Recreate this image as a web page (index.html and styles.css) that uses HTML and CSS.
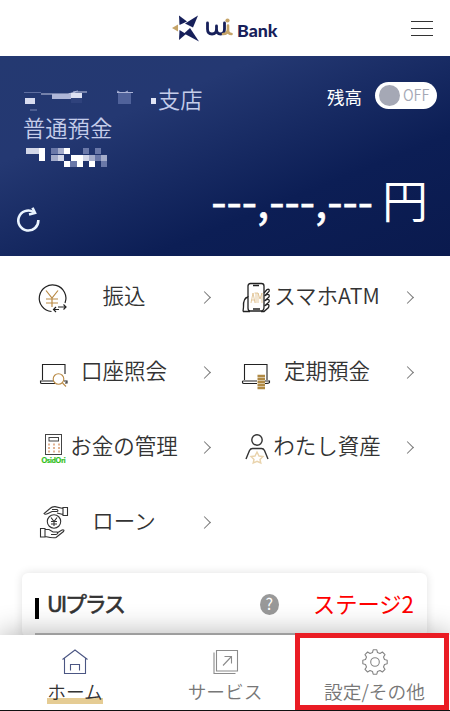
FILE: index.html
```html
<!DOCTYPE html>
<html lang="ja">
<head>
  <meta charset="UTF-8">
  <title>UI Bank</title>
  <link rel="stylesheet" href="styles.css">
</head>
<body>
  <div class="app">
    <header class="header">
      <div class="logo">
        <svg class="logo-mark" viewBox="0 0 28 28" width="28" height="28">
          <g fill="#17205a">
            <path d="M7 1.500 L15 7.500 L7.500 11 Z"/>
            <path d="M26 1.500 L21 13.500 L13 9.500 Z"/>
            <path d="M7 26 L7.500 16 L14 20 Z"/>
            <path d="M27 27.500 L12 19.500 L18 14 Z"/>
          </g>
          <path d="M6 10.500 L6 17.500 L0 14 Z" fill="#c5a468"/>
        </svg>
        <svg class="logo-ui" viewBox="0 0 28 20" width="28" height="20" fill="none" stroke-width="2.800" stroke-linecap="round">
          <path d="M1.500 5 V11 Q1.500 16 6 16 Q10.500 16 10.500 11 V8 M10.500 11 Q10.500 16 14.500 16 Q18.500 16 18.500 11 V5" stroke="#17205a"/>
          <path d="M22 7.500 V12 Q22 16 25.500 16 M17 16 Q22 16 22 11" stroke="#c5a468" stroke-width="2.600"/>
          <circle cx="21.500" cy="2.500" r="2.100" fill="#c5a468"/>
        </svg>
        <span class="logo-text">Bank</span>
      </div>
      <div class="burger"><span></span><span></span><span></span></div>
    </header>

    <section class="account">
      <div class="account-top">
        <div class="account-info">
          <div class="branch">
            <svg class="mask-name" viewBox="0 0 134 24" width="134" height="24">
              <path d="M0 5.500 H17" stroke="#7885b4" stroke-width=".7"/>
              <path d="M17 7 H44 L52 5 H63" stroke="#c5cbe5" stroke-width="1" fill="none"/>
              <rect x="1" y="11" width="10" height="6" fill="#d8dcf0"/>
              <rect x="28" y="7" width="19" height="5" fill="#afb7d8"/>
              <rect x="47" y="6" width="11" height="5" fill="#dde1f2"/>
              <rect x="47" y="11" width="11" height="5" fill="#2f427c"/>
              <path d="M49 5 L54 4 M93 4 L96 5.500 M104 4 L101 5.500 M93 5.500 H109" stroke="#aab3d6"/>
              <rect x="94" y="6" width="13" height="11" fill="#50629a"/>
              <rect x="127" y="11" width="5" height="6" fill="#e0e4f4"/>
              <path d="M6 23 H13" stroke="#7885b4"/>
            </svg><span>支店</span>
          </div>
          <div class="type">普通預金</div>
          <svg class="mask-number" viewBox="0 0 86 20" width="86" height="20" shape-rendering="crispEdges">
            <g fill="#fff">
              <path d="M13 0h6v13h-6zM45 7h13v6h-13zM38 13h6v6h-6zM51 13h6v6h-6zM63 13h6v6h-6z"/>
              <path d="M38 0h6v6h-6z"/>
            </g>
            <path d="M0 0h13v6h-13zM32 7h6v6h-6zM57 7h6v6h-6z" fill="#d3d7e8"/>
            <path d="M25 7h7v6h-7zM32 0h6v6h-6zM63 7h6v6h-6zM75 7h6v6h-6z" fill="#a4acca"/>
            <path d="M25 0h7v6h-7zM57 0h6v6h-6zM69 0h6v6h-6zM69 7h6v6h-6zM75 13h6v6h-6zM44 13h7v6h-7z" fill="#6a78a8"/>
          </svg>
        </div>
        <div class="balance-switch">
          <span class="switch-label">残高</span>
          <div class="toggle"><i class="knob"></i><span>OFF</span></div>
        </div>
      </div>
      <div class="account-bottom">
        <svg class="reload" viewBox="0 0 24 26" width="24" height="26" fill="none" stroke="#eaf4ff" stroke-width="2.600">
          <path d="M16.500 5 A10 10 0 1 0 21.300 13"/>
          <path d="M15.500 .8 L18 6 L12 7.500"/>
        </svg>
        <div class="amount"><span class="digits">---,---,---</span> <span class="yen">円</span></div>
      </div>
    </section>

    <section class="menu">
      <a class="item">
        <svg class="icon" viewBox="0 0 32 34" width="32" height="34" fill="none" stroke="#222" stroke-width="1.200">
          <path d="M14.500 30.500 A13.300 13.300 0 1 1 28 22"/>
          <path d="M17 28.500 H22 M19 26 L16.500 28.500 L19 31 M21 26 H29 M26.500 23.500 L29 26 L26.500 28.500"/>
          <path d="M9 9.500 L15 17 L21 9.500 M15 17 V26 M9 18 H21 M9 22 H21" stroke="#b98a45"/>
        </svg>
        <span class="label">振込</span><i class="chevron"></i>
      </a>
      <a class="item">
        <svg class="icon" viewBox="0 0 32 34" width="32" height="34" fill="none" stroke="#222" stroke-width="1.300">
          <path d="M8 16 V5 Q8 2.500 10.500 2.500 H21.500 Q24 2.500 24 5 V26 Q24 30 21 30 H10 Q8 30 8 27 V25"/>
          <path d="M13 4.500 H19 M13 28 H20" stroke-width="1.500"/>
          <path d="M3 30.500 H10 M3 30.500 L3.500 26 Q3 17 8 16 V25"/>
          <path d="M24 12 L27 8.500 Q30 7.500 29 10.500 L24.500 15 L27 13.500 Q30 13 29 16 L24.500 20 L27 18.500 Q30 18 29 21 L24.500 25 L27 23.500 Q30 23 28.500 26.500 L24 30.500 H21"/>
          <path d="M11 22 L13 12 L15 22 M11.500 19 H14.500 M14.500 12 H18 M16 12 V22 M18 22 V12 L20 18 L22 12 V22" stroke="#ddbd88" stroke-width=".8"/>
        </svg>
        <span class="label">スマホATM</span><i class="chevron"></i>
      </a>
      <a class="item">
        <svg class="icon" viewBox="0 0 32 34" width="32" height="34" fill="none" stroke="#222" stroke-width="1.100">
          <path d="M5.500 24 V8.500 H28 V18 M5.500 25 H3.500 V26.500 Q3.500 27.500 5 27.500 H18 M3.500 25 H17 M27 25 H30 V27 H28"/>
          <circle cx="21.500" cy="23" r="5.300" stroke="#b98a45"/>
          <path d="M25.500 27 L29 30.500" stroke="#b98a45"/>
        </svg>
        <span class="label">口座照会</span><i class="chevron"></i>
      </a>
      <a class="item">
        <svg class="icon" viewBox="0 0 32 34" width="32" height="34" fill="none" stroke="#222" stroke-width="1.100">
          <path d="M4.500 24 V8.500 H27 V24 M2.500 25 H17 M2.500 25 V26.500 Q2.500 27.500 4 27.500 H17 M25 25 H29.500 V26.500 Q29 27.500 25 27.500"/>
          <path d="M17.500 20 H25 M17.500 23 H25 M17.500 26 H25 M17.500 29 H25 M17.500 32 H25" stroke="#b08a45" stroke-width="2.400"/>
        </svg>
        <span class="label">定期預金</span><i class="chevron"></i>
      </a>
      <a class="item">
        <svg class="icon" viewBox="0 0 32 34" width="32" height="34" fill="none" stroke="#444">
          <rect x="8.500" y="3.500" width="16" height="20"/>
          <rect x="12" y="6.500" width="9.500" height="3.500"/>
          <path d="M11 13.500 H23 M11 17 H23 M11 20.500 H23" stroke="#e2b393" stroke-width="1.800" stroke-dasharray="2 3"/>
          <text x="16.500" y="31.500" class="osidori" textLength="24">OsidOri</text>
        </svg>
        <span class="label">お金の管理</span><i class="chevron"></i>
      </a>
      <a class="item">
        <svg class="icon" viewBox="0 0 32 34" width="32" height="34" fill="none" stroke="#333" stroke-width="1.400">
          <circle cx="17" cy="9" r="5.200"/>
          <path d="M6 28 L9.500 19.500 Q10.500 17.500 12.500 17.500 H21.500 Q23.500 17.500 24.500 19.500 L28 28"/>
          <path d="M17 21 L19 25 L23 25.500 L20 28.500 L20.800 32 L17 30.300 L13.200 32 L14 28.500 L11 25.500 L15 25 Z" stroke="#e9d3ac"/>
        </svg>
        <span class="label">わたし資産</span><i class="chevron"></i>
      </a>
      <a class="item">
        <svg class="icon" viewBox="0 0 32 34" width="32" height="34" fill="none" stroke="#333" stroke-width="1.100">
          <circle cx="17" cy="15.500" r="6.700"/>
          <path d="M14 11.500 L17 15.500 L20 11.500 M17 15.500 V20 M14 15.500 H20 M14 18 H20"/>
          <path d="M26 1.500 H30.500 V9.500 H26 Z M26 2.500 L18 .6 Q15 .5 13 2.500 L7 7.500 Q8 9 11 7.500 L15 5.500 H20 Q22 5 20 3.500 H15 M20 7 L26 8.500"/>
          <path d="M8 22.500 H3.500 V31 H8 Z M8 23.500 H12 L16 26 H20 Q22 27.500 19 28.500 H14 M20 27 L25 24 Q28 23.500 26.500 25.500 L19 31.500 Q17 32.500 8 30.500"/>
        </svg>
        <span class="label">ローン</span><i class="chevron"></i>
      </a>
    </section>

    <section class="plus">
      <div class="plus-head">
        <span class="plus-title">UIプラス</span>
        <span class="help">?</span>
        <span class="stage">ステージ2</span>
      </div>
    </section>

    <nav class="tabs">
      <a class="tab active">
        <svg viewBox="0 0 28 28" width="28" height="28" fill="none" stroke="#4b5683" stroke-width="1.100">
          <path d="M1.500 11.500 L14 2 L26.500 11.500 M3.500 10.500 V25.500 H24.500 V10.500 M9.500 22.500 V16.500 H18.500 V22.500"/>
        </svg>
        <span>ホーム</span>
      </a>
      <a class="tab">
        <svg viewBox="0 0 28 28" width="28" height="28" fill="none" stroke="#8b8b8b" stroke-width="1.100">
          <path d="M5.500 2.500 H26.500 V23 H5.500 Z M3 4.500 V25.500 H24.500 M12 17.500 L20 9 M13.500 8.500 H20.500 V15.500"/>
        </svg>
        <span>サービス</span>
      </a>
      <a class="tab selected">
        <svg viewBox="0 0 28 28" width="28" height="28" fill="none" stroke="#858585" stroke-width="1.100" stroke-linejoin="round">
          <path d="M11.500 4.500 L12.200 1.800 H15.800 L16.500 4.500 L19 5.500 L21.400 4 L24 6.600 L22.500 9 L23.500 11.500 L26.200 12.200 V15.800 L23.500 16.500 L22.500 19 L24 21.400 L21.400 24 L19 22.500 L16.500 23.500 L15.800 26.200 H12.200 L11.500 23.500 L9 22.500 L6.600 24 L4 21.400 L5.500 19 L4.500 16.500 L1.800 15.800 V12.200 L4.500 11.500 L5.500 9 L4 6.600 L6.600 4 L9 5.500 Z"/>
          <circle cx="14" cy="14" r="4.300"/>
        </svg>
        <span>設定/その他</span>
      </a>
    </nav>
  </div>
</body>
</html>
```
FILE: styles.css
```css
* {
  box-sizing: border-box;
}
html, body {
  margin: 0;
  padding: 0;
  font-family: "Noto Sans CJK JP", sans-serif;
  background: #fff;
}
.app {
  width: 450px;
  height: 711px;
  display: flex;
  flex-direction: column;
  overflow: hidden;
}

.header {
  height: 56px;
  flex: none;
  display: flex;
  align-items: center;
  justify-content: space-between;
  padding: 0 17px 0 172px;
}
.logo {
  display: flex;
  align-items: center;
}
.logo-ui {
  margin-left: 6px;
}
.logo-text {
  font-family: Lato, sans-serif;
  font-weight: 900;
  font-size: 17.800px;
  line-height: 20px;
  color: #17205a;
  margin: 4px 0 0 3px;
}
.burger {
  width: 22px;
  display: flex;
  flex-direction: column;
  gap: 6px;
}
.burger span {
  height: 1px;
  background: #333;
}

.account {
  height: 200px;
  flex: none;
  display: flex;
  flex-direction: column;
  justify-content: space-between;
  color: #fff;
  background: linear-gradient(158deg, #243971 0%, #243872 28%, #0c1e55 68%, #0a1a4e 100%);
}
.account-top {
  display: flex;
  justify-content: space-between;
  height: 112px;
  padding: 28px 13px 0 23px;
}
.account-info {
  font-size: 22.300px;
  line-height: 30px;
  font-weight: 350;
  color: #c5cdea;
}
.branch {
  display: flex;
  height: 28px;
  line-height: 29px;
}
.mask-name {
  margin: 3px 0 0 1px;
}
.type {
  height: 30px;
}
.mask-number {
  display: block;
  margin: 6px 0 0 3px;
}
.balance-switch {
  display: flex;
  height: 26px;
  margin-top: -2px;
}
.switch-label {
  font-size: 17.500px;
  line-height: 29px;
  margin-right: 13px;
}
.toggle {
  width: 62px;
  height: 27px;
  border-radius: 14px;
  background: #fff;
  color: #a5a8b5;
  display: flex;
  align-items: center;
  padding-left: 4px;
  font-size: 15.500px;
  font-weight: 350;
}
.toggle span {
  line-height: 22px;
  margin: -4px 0 0 3px;
  transform: scaleX(.93);
  transform-origin: left;
}
.knob {
  width: 21px;
  height: 21px;
  border-radius: 50%;
  background: #a5a8b5;
}
.account-bottom {
  display: flex;
  justify-content: space-between;
  align-items: flex-end;
  height: 88px;
  padding: 0 22px 23px 17px;
}
.amount {
  font-size: 44px;
  line-height: 62px;
  height: 66px;
  white-space: pre;
}
.digits {
  -webkit-text-stroke: .6px #fff;
}
.yen {
  font-size: 46px;
  font-weight: 350;
  margin-left: -1px;
}

.menu {
  flex: none;
  display: grid;
  grid-template-columns: 203px 203px;
  grid-auto-rows: 75px;
  padding: 4px 0 0 37px;
}
.item {
  display: flex;
  align-items: center;
  color: #333;
}
.icon {
  flex: none;
}
.label {
  width: 110px;
  font-size: 21.500px;
  line-height: 30px;
  font-weight: 350;
  text-align: center;
  white-space: nowrap;
  margin-top: -6px;
}
.chevron {
  width: 9px;
  height: 9px;
  border: solid #777;
  border-width: 1px 1px 0 0;
  transform: rotate(45deg);
  margin-left: 21px;
}
.osidori {
  font: 900 7px Lato, sans-serif;
  fill: #2fc01a;
  stroke: #2fc01a;
  stroke-width: .2px;
  text-anchor: middle;
}

.plus {
  height: 64px;
  flex: none;
  margin: 13px 23px 0 22px;
  padding: 16px 13px 0;
  border-radius: 6px;
  box-shadow: 0 0 10px rgba(0,0,0,0.12);
}
.plus-head {
  height: 46px;
  display: flex;
  border-bottom: 2px solid #bbb;
}
.plus-title {
  height: 21px;
  margin-top: 9px;
  border-left: 4px solid #000;
  padding-left: 8px;
  width: 225px;
  font-size: 22px;
  line-height: 9px;
  letter-spacing: -2.200px;
  color: #333;
  -webkit-text-stroke: .6px #333;
}
.help {
  width: 19px;
  height: 21px;
  margin-top: 5px;
  border-radius: 50%;
  background: #999;
  color: #fff;
  font-size: 16px;
  line-height: 19px;
  text-align: center;
}
.stage {
  margin-left: 34px;
  font-size: 22.300px;
  line-height: 28px;
  color: #f00;
  white-space: nowrap;
}

.tabs {
  position: relative;
  flex: none;
  height: 76px;
  margin-top: -2px;
  display: grid;
  grid-template-columns: 150px 145px 155px;
  background: #fff;
  border-bottom: 1px solid #111;
  box-shadow: 0 -2px 28px rgba(0,0,0,0.3);
}
.tab {
  display: flex;
  flex-direction: column;
  align-items: center;
  padding: 13px 0 0 5px;
  font-size: 18.700px;
  line-height: 26px;
  font-weight: 350;
  color: #777;
}
.tab span {
  margin-top: 2px;
}
.active {
  padding-left: 0;
}
.active span {
  color: #333;
  background: linear-gradient(transparent 20px, #e5cc94 20px);
}
.selected {
  margin: -2px 1px 0 0;
  padding-top: 10px;
  border: 5px solid #ea1c24;
}
```
